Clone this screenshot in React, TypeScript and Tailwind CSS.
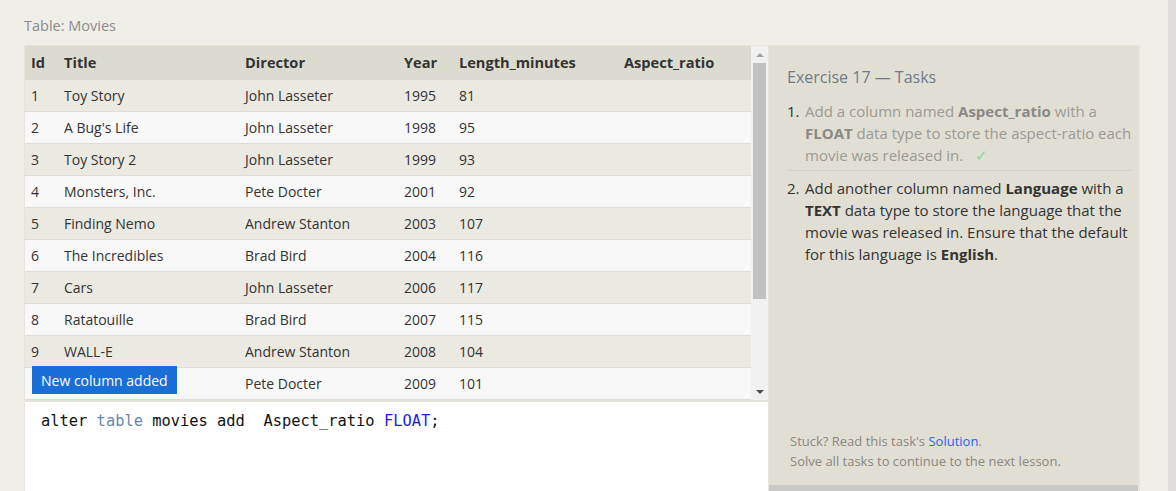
import React from "react";

const MOVIES = [
    { id: 1, title: "Toy Story", director: "John Lasseter", year: 1995, length: 81 },
    { id: 2, title: "A Bug's Life", director: "John Lasseter", year: 1998, length: 95 },
    { id: 3, title: "Toy Story 2", director: "John Lasseter", year: 1999, length: 93 },
    { id: 4, title: "Monsters, Inc.", director: "Pete Docter", year: 2001, length: 92 },
    { id: 5, title: "Finding Nemo", director: "Andrew Stanton", year: 2003, length: 107 },
    { id: 6, title: "The Incredibles", director: "Brad Bird", year: 2004, length: 116 },
    { id: 7, title: "Cars", director: "John Lasseter", year: 2006, length: 117 },
    { id: 8, title: "Ratatouille", director: "Brad Bird", year: 2007, length: 115 },
    { id: 9, title: "WALL-E", director: "Andrew Stanton", year: 2008, length: 104 },
    { id: 10, title: "Up", director: "Pete Docter", year: 2009, length: 101 },
];

const COLS = "grid grid-cols-[33px_181px_159px_55px_165px_1fr]";

function Scrollbar() {
    return (
        <div className="w-[17px] shrink-0 bg-[#f1f1f1] flex flex-col items-center">
            <div className="h-[17px] w-full flex items-center justify-center">
                <div className="w-0 h-0 border-l-[4px] border-r-[4px] border-b-[4px] border-l-transparent border-r-transparent border-b-[#a3a3a3]" />
            </div>
            <div className="w-[13px] h-[236px] bg-[#c1c1c1]" />
            <div className="flex-1" />
            <div className="h-[17px] w-full flex items-center justify-center">
                <div className="w-0 h-0 border-l-[4px] border-r-[4px] border-t-[4px] border-l-transparent border-r-transparent border-t-[#505050]" />
            </div>
        </div>
    );
}

function MoviesTable() {
    return (
        <div className="relative flex h-[354px]">
            <div className="flex-1 flex flex-col">
                {/* Header */}
                <div className={`${COLS} h-[34px] items-center bg-[#dcdbd0] font-bold text-[#333] text-[14.6px]`}>
                    <div className="px-1.5">Id</div>
                    <div className="px-1.5">Title</div>
                    <div className="px-1.5">Director</div>
                    <div className="px-1.5">Year</div>
                    <div className="px-1.5">Length_minutes</div>
                    <div className="px-1.5">Aspect_ratio</div>
                </div>
                {MOVIES.map((m, i) => (
                    <div
                        key={m.id}
                        className={`${COLS} h-[32px] items-center text-[14px] text-[#333] border-b border-[#dedcd5] ${
                            i % 2 === 0 ? "bg-[#eae9e2]" : "bg-[#f8f8f8]"
                        }`}
                    >
                        <div className="px-1.5">{m.id}</div>
                        <div className="px-1.5">{m.title}</div>
                        <div className="px-1.5">{m.director}</div>
                        <div className="px-1.5">{m.year}</div>
                        <div className="px-1.5">{m.length}</div>
                        <div className="px-1.5"></div>
                    </div>
                ))}
            </div>
            <Scrollbar />

            {/* toast */}
            <div className="absolute left-[7px] top-[320px] h-[28px] px-[9px] flex items-center bg-[#1a6ed8] text-white text-[14px]">
                New column added
            </div>
        </div>
    );
}

function Editor() {
    return (
        <div className="flex-1 bg-white border-t-2 border-[#e4e2dc] pl-4 pt-[9px] font-['DejaVu_Sans_Mono',monospace] text-[15.4px] leading-5 text-[#111]">
            <span>alter </span>
            <span className="text-[#6a86b0]">table</span>
            <span> movies add&nbsp;&nbsp;Aspect_ratio </span>
            <span className="text-[#1c1cf5]">FLOAT</span>
            <span>;</span>
        </div>
    );
}

function TasksPanel() {
    return (
        <div className="w-[372px] shrink-0 flex flex-col bg-[#e1dfd4] border-l border-r-2 border-[#e6e4dc]">
            <div className="flex-1 pl-[18px] pr-[6px] pt-[20px]">
                <h2 className="text-[16px] leading-[22px] text-[#6e7b8b]">Exercise 17 — Tasks</h2>
                <ol className="mt-[12px] text-[15px] leading-[22px]">
                    <li className="flex pb-[4px] border-b border-[#d4d2c8] text-[#9b9a94]">
                        <span className="w-[18px] shrink-0 text-[#333]">1.</span>
                        <span>
                            Add a column named <b className="text-[#8a8983]">Aspect_ratio</b> with a{" "}
                            <b className="text-[#8a8983]">FLOAT</b> data type to store the aspect-ratio each movie
                            was released in. <span className="ml-2 text-[#8fd48f]">✓</span>
                        </span>
                    </li>
                    <li className="flex pt-[6px] text-[#333]">
                        <span className="w-[18px] shrink-0">2.</span>
                        <span>
                            Add another column named <b>Language</b> with a <b>TEXT</b> data type to store the
                            language that the movie was released in. Ensure that the default for this language is{" "}
                            <b>English</b>.
                        </span>
                    </li>
                </ol>
            </div>
            <div className="pl-[21px] pb-[14px] text-[13px] leading-5 text-[#8a8680]">
                <div>
                    Stuck? Read this task's <span className="text-[#2f62e6]">Solution</span>.
                </div>
                <div>Solve all tasks to continue to the next lesson.</div>
            </div>
            <div className="h-[6px] bg-[#c8c8c6]" />
        </div>
    );
}

export default function App() {
    return (
        <div className="flex w-[1176px] h-[491px] overflow-hidden bg-[#f0eee8] font-['Open_Sans',sans-serif]">
            <div className="flex-1 flex flex-col pl-6 pr-[28px]">
                <div className="pt-4 h-[45px] text-[14.5px] leading-5 text-[#8a8a8a]">Table: Movies</div>
                <div className="flex-1 flex border-t border-[#e6e4dc]">
                    <div className="w-[744px] shrink-0 flex flex-col border-l border-[#e6e4dc]">
                        <MoviesTable />
                        <Editor />
                    </div>
                    <TasksPanel />
                </div>
            </div>
            <div className="w-2 bg-[#e0dcda]" />
        </div>
    );
}
